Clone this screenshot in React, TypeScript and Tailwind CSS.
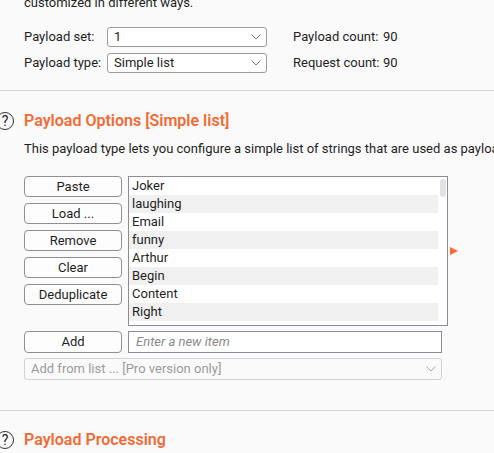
import React from "react";

const Chevron = ({ color = "#7a7a7a" }: { color?: string }) => (
  <svg width="10" height="6" viewBox="0 0 10 6" className="shrink-0">
    <polyline points="0.5,0.5 5,5 9.5,0.5" fill="none" stroke={color} strokeWidth="1" />
  </svg>
);

const Help = () => (
  <div className="w-[18px] h-[18px] rounded-full border-[1.4px] border-[#333] flex items-center justify-center text-[14px] leading-none text-[#222] ml-[-4px] shrink-0">
    ?
  </div>
);

const items = ["Joker", "laughing", "Email", "funny", "Arthur", "Begin", "Content", "Right"];

export default function App() {
  return (
    <div
      className="w-[494px] h-[453px] overflow-hidden bg-[#fafafa] text-[#1f1f1f] text-[13px]"
      style={{ fontFamily: "Roboto, 'Noto Sans', sans-serif" }}
    >
      <div className="pl-6">
        <div className="mt-[-6px] h-[18px] leading-[18px] whitespace-nowrap">customized in different ways.</div>
        <div className="mt-[15px] flex">
          <div className="flex flex-col gap-[6px]">
            <div className="flex items-center h-[20px]">
              <div className="w-[83px]">Payload set:</div>
              <div className="w-[160px] h-[20px] border border-[#9c9c9c] rounded-[3px] bg-white flex items-center justify-between pl-[6px] pr-[5px]">
                <span>1</span>
                <Chevron />
              </div>
            </div>
            <div className="flex items-center h-[20px]">
              <div className="w-[83px]">Payload type:</div>
              <div className="w-[160px] h-[20px] border border-[#9c9c9c] rounded-[3px] bg-white flex items-center justify-between pl-[6px] pr-[5px]">
                <span>Simple list</span>
                <Chevron />
              </div>
            </div>
          </div>
          <div className="ml-[26px] flex flex-col gap-[6px]">
            <div className="flex items-center h-[20px]">
              <div className="w-[90px]">Payload count:</div>
              <div>90</div>
            </div>
            <div className="flex items-center h-[20px]">
              <div className="w-[90px]">Request count:</div>
              <div>90</div>
            </div>
          </div>
        </div>
      </div>

      <div className="mt-[17px] h-px bg-[#d6d6d6]" />

      <div className="mt-[21px] flex items-center h-[18px]">
        <Help />
        <div className="ml-[10px] text-[16px] font-semibold text-[#f26b36] whitespace-nowrap">
          Payload Options [Simple list]
        </div>
      </div>
      <div className="pl-6 mt-[10px] h-[18px] leading-[18px] whitespace-nowrap">
        This payload type lets you configure a simple list of strings that are used as payloads
      </div>

      <div className="pl-6 mt-[18px] flex">
        <div className="flex flex-col gap-[6px] w-[98px]">
          {["Paste", "Load ...", "Remove", "Clear", "Deduplicate"].map((b) => (
            <div
              key={b}
              className="h-[21px] border border-[#8f8f8f] rounded-[4px] bg-[#fdfdfd] flex items-center justify-center"
            >
              {b}
            </div>
          ))}
        </div>
        <div className="ml-[6px] w-[320px] h-[150px] border border-[#8e8a9b] bg-white flex">
          <div className="w-[309px]">
            {items.map((it, i) => (
              <div
                key={it}
                className={`h-[18px] leading-[18px] pl-[3px] ${i % 2 === 1 ? "bg-[#f0f0f0]" : "bg-white"}`}
              >
                {it}
              </div>
            ))}
          </div>
          <div className="ml-[2px] mt-[2px] w-[6px] h-[18px] rounded-[3px] bg-[#e2e2e2]" />
        </div>
        <div className="ml-[2px] mt-[71px]">
          <svg width="8" height="8" viewBox="0 0 8 8">
            <polygon points="0,0 0,8 8,4" fill="#ff6633" />
          </svg>
        </div>
      </div>

      <div className="pl-6 mt-[5px] flex">
        <div className="w-[98px] h-[22px] border border-[#8f8f8f] rounded-[4px] bg-[#fdfdfd] flex items-center justify-center">
          Add
        </div>
        <div className="ml-[6px] w-[314px] h-[22px] border border-[#8e8a9b] bg-white flex items-center pl-[7px] italic text-[#8a8a8a]">
          Enter a new item
        </div>
      </div>
      <div className="pl-6 mt-[5px]">
        <div className="w-[418px] h-[22px] border border-[#d2d2d2] rounded-[3px] bg-[#fafafa] flex items-center justify-between pl-[6px] pr-[5px] text-[#9a9a9a]">
          <span>Add from list ... [Pro version only]</span>
          <Chevron color="#a8a8a8" />
        </div>
      </div>

      <div className="mt-[30px] h-px bg-[#d6d6d6]" />

      <div className="mt-[20px] flex items-center h-[18px]">
        <Help />
        <div className="ml-[10px] text-[16px] font-semibold text-[#f26b36] whitespace-nowrap">Payload Processing</div>
      </div>
    </div>
  );
}
